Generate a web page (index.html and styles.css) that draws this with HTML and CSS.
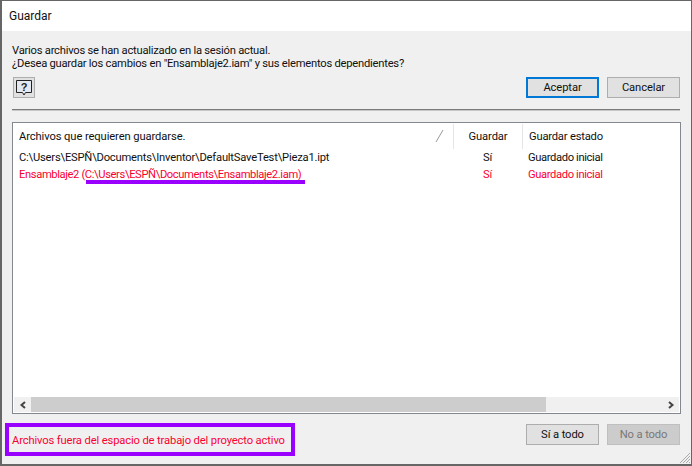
FILE: index.html
```html
<!DOCTYPE html>
<html lang="es">
<head>
<meta charset="utf-8">
<title>Guardar</title>
<link rel="stylesheet" href="styles.css">
</head>
<body>
<div class="window">
  <header class="titlebar">Guardar</header>
  <main class="content">
    <p class="message">Varios archivos se han actualizado en la sesión actual.<br>¿Desea guardar los cambios en "Ensamblaje2.iam" y sus elementos dependientes?</p>
    <div class="actions">
      <button class="btn help" aria-label="Ayuda">
        <svg width="18" height="18" viewBox="0 0 18 18">
          <path d="M1.5 1.5h15v12h-6l-1.500 2.500l-1.500-2.500h-6z" fill="#e4e8f0" stroke="#222" stroke-width="1"/>
          <text x="9" y="11.500" class="help-mark">?</text>
        </svg>
      </button>
      <span class="spacer"></span>
      <button class="btn default">Aceptar</button>
      <button class="btn">Cancelar</button>
    </div>
    <div class="rule"></div>
    <section class="list">
      <div class="rows">
        <div class="row head">
          <span class="name">Archivos que requieren guardarse.<svg class="sort" width="9" height="14" viewBox="0 0 9 14"><path d="M1 13L8 1" stroke="#999" fill="none"/></svg></span>
          <span class="save">Guardar</span>
          <span class="state">Guardar estado</span>
        </div>
        <div class="row">
          <span class="name">C:\Users\ESPÑ\Documents\Inventor\DefaultSaveTest\Pieza1.ipt</span>
          <span class="save">Sí</span>
          <span class="state">Guardado inicial</span>
        </div>
        <div class="row red">
          <span class="name">Ensamblaje2 (C:\Users\ESPÑ\Documents\Ensamblaje2.iam)<i class="underline"></i></span>
          <span class="save">Sí</span>
          <span class="state">Guardado inicial</span>
        </div>
      </div>
      <div class="scrollbar">
        <span class="arrow"><svg width="8" height="8" viewBox="0 0 8 8"><path d="M6 1L2.500 4L6 7" stroke="#444" stroke-width="2" fill="none"/></svg></span>
        <span class="thumb"></span>
        <span class="track"></span>
        <span class="arrow"><svg width="8" height="8" viewBox="0 0 8 8"><path d="M2 1L5.500 4L2 7" stroke="#444" stroke-width="2" fill="none"/></svg></span>
      </div>
    </section>
    <footer class="footer">
      <div class="notice">Archivos fuera del espacio de trabajo del proyecto activo</div>
      <span class="spacer"></span>
      <button class="btn">Sí a todo</button>
      <button class="btn disabled" disabled>No a todo</button>
    </footer>
  </main>
  <svg class="grip" width="12" height="12" viewBox="0 0 12 12"><path d="M1 11L11 1M4 11L11 4M7 11L11 7M10 11L11 10" stroke="#aaa" fill="none"/></svg>
</div>
</body>
</html>
```
FILE: styles.css
```css
* { box-sizing: border-box; }
html, body { margin: 0; padding: 0; }
body {
  width: 692px;
  height: 466px;
  overflow: hidden;
  font-family: Roboto, "Noto Sans", sans-serif;
  font-size: 11.200px;
  letter-spacing: -0.2px;
  color: #111;
}
.window {
  position: relative;
  width: 692px;
  height: 466px;
  display: flex;
  flex-direction: column;
  border: 1px solid #666;
  border-left-width: 2px;
  border-bottom-width: 2px;
  background: #f0f0f0;
}
.titlebar {
  height: 30px;
  flex: none;
  background: #fff;
  padding: 6px 0 0 7px;
  font-size: 12px;
  letter-spacing: 0;
  line-height: 18px;
}
.content {
  flex: 1;
  display: flex;
  flex-direction: column;
  padding: 13px 11px 0 10px;
}
.message {
  margin: 0;
  line-height: 13px;
  height: 26px;
  letter-spacing: -0.23px;
  white-space: nowrap;
}
.actions {
  display: flex;
  gap: 8px;
  margin: 7px 0 0 1px;
}
.spacer { flex: 1; }
.btn {
  width: 73px;
  height: 21px;
  padding: 0;
  border: 1px solid #adadad;
  background: #e1e1e1;
  font: inherit;
  letter-spacing: -0.1px;
  line-height: 17px;
  color: #111;
}
.btn.help {
  width: 22px;
  display: flex;
  align-items: center;
  justify-content: center;
}
.help-mark {
  font-family: "Liberation Sans", sans-serif;
  font-size: 11px;
  font-weight: 700;
  text-anchor: middle;
  fill: #222;
}
.btn.default { border: 2px solid #0078d7; line-height: 16px; }
.btn.disabled { background: #ccc; border-color: #bfbfbf; color: #787878; }
.rule {
  height: 2px;
  margin-top: 11px;
  background: #7a7a7a;
  border-bottom: 1px solid #c8c8c8;
}
.list {
  width: 669px;
  height: 292px;
  margin-top: 11px;
  display: flex;
  flex-direction: column;
  background: #fff;
  border: 1px solid #828790;
  padding: 1px;
}
.rows { flex: 1; }
.row {
  display: grid;
  grid-template-columns: 439px 69px 1fr;
  height: 17px;
  line-height: 17px;
}
.row.head {
  height: 25px;
  line-height: 25px;
  letter-spacing: -0.1px;
}
.row.head .save, .row.head .state { border-left: 1px solid #e5e5e5; }
.name {
  position: relative;
  padding-left: 5px;
  white-space: nowrap;
}
.red .name { letter-spacing: -0.38px; }
.save { text-align: center; }
.state { padding-left: 6px; white-space: nowrap; letter-spacing: -0.37px; }
.row.head .state { letter-spacing: -0.2px; }
.sort {
  position: absolute;
  left: 421px;
  top: 5px;
}
.red { color: #fa0030; }
.underline {
  position: absolute;
  left: 72px;
  top: 14px;
  width: 219px;
  height: 4px;
  background: #9900ff;
}
.scrollbar {
  display: flex;
  height: 15px;
  background: #f0f0f0;
}
.arrow {
  width: 17px;
  display: flex;
  align-items: center;
  justify-content: center;
}
.thumb { width: 515px; background: #cdcdcd; }
.track { flex: 1; }
.footer {
  display: flex;
  align-items: flex-start;
  gap: 8px;
  margin: 9px 0 0 -7px;
}
.notice {
  width: 290px;
  height: 33px;
  border: 4px solid #9900ff;
  color: #fa0030;
  line-height: 27px;
  letter-spacing: -0.13px;
  padding-left: 3px;
  white-space: nowrap;
}
.footer .btn { margin-top: 1px; }
.grip {
  position: absolute;
  right: 0;
  bottom: 0;
}
```
